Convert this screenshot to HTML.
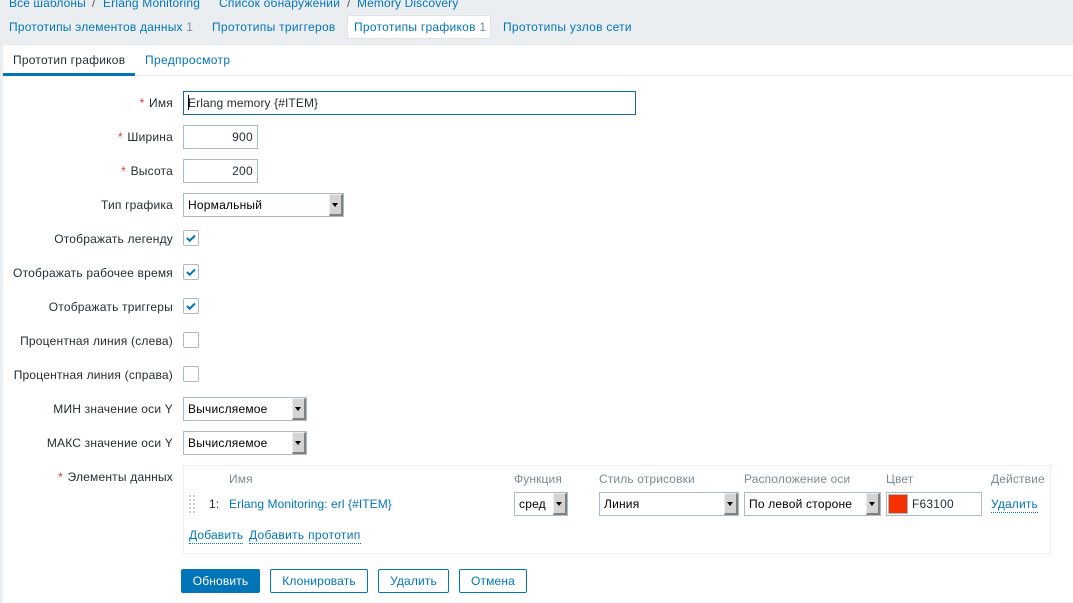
<!DOCTYPE html>
<html lang="ru"><head><meta charset="utf-8"><title>Прототип графиков</title>
<style>
html,body{margin:0;padding:0;width:1073px;height:603px;overflow:hidden;background:#ebeef0}
body{font:12px/14px "Liberation Sans",sans-serif;color:#1f2c33;position:relative;letter-spacing:.2px}
div,span,a,b{position:absolute;white-space:nowrap;box-sizing:border-box}
a{color:#0275b8;text-decoration:none}
i{font-style:normal}
.t{letter-spacing:.27px}
.t i{letter-spacing:0}
.lat{letter-spacing:.1px}
.c{position:absolute;left:3px;top:45px;width:1070px;height:558px;background:#fff}
.l{right:900px;text-align:right}
.l i{color:#e33734;margin-right:1px}
.in{background:#fff;border:1px solid #acbbc2;height:24px;line-height:22px;padding:0 4px}
.s{background:#fff;border:1px solid #acbbc2;height:24px;line-height:22px;padding:0 4px;color:#000}
.s b{right:0;top:0;width:14px;height:22px;background:#d4d4d4;border-top:1px solid #eee;border-left:1px solid #eee;border-right:2px solid #808080;border-bottom:2px solid #808080}
.s b:after{content:"";position:absolute;left:2px;top:8px;border-left:3.5px solid transparent;border-right:3.5px solid transparent;border-top:4px solid #000}
.ch{left:183px;width:16px;height:16px;border:1px solid #acbbc2;border-radius:2px;background:#fff}
.ch svg{position:absolute;left:1px;top:1px}
.h{color:#768d99;top:472px;letter-spacing:.13px}
.d{border-bottom:1px dotted #0275b8;line-height:13px;height:15px}
.b{top:569px;height:24px;line-height:22px;border:1px solid #0275b8;border-radius:2px;text-align:center;color:#0275b8;background:#fff;letter-spacing:.15px}
.n{color:#768d99}
</style></head><body>
<a style="left:9px;top:-4px;letter-spacing:.1px">Все шаблоны</a><span style="left:92px;top:-4px;color:#555">/</span>
<a class="lat" style="left:103px;top:-4px;letter-spacing:.18px">Erlang Monitoring</a>
<a style="left:219px;top:-4px">Список обнаружений</a><span style="left:347px;top:-4px;color:#555">/</span>
<a class="lat" style="left:357px;top:-4px;letter-spacing:.13px">Memory Discovery</a>
<a class="t" style="left:9px;top:20px;letter-spacing:.2px">Прототипы элементов данных <i class="n">1</i></a>
<a class="t" style="left:212px;top:20px;letter-spacing:.3px">Прототипы триггеров</a>
<div style="left:347px;top:15px;width:144px;height:24px;background:#fff;border:1px solid #dfe4e7;border-radius:2px"></div>
<a class="t" style="left:354px;top:20px">Прототипы графиков <i class="n">1</i></a>
<a class="t" style="left:503px;top:20px">Прототипы узлов сети</a>
<div class="c"></div>
<div style="left:3px;top:75px;width:1070px;height:1px;background:#ebeef0"></div>
<span style="left:13px;top:53px;letter-spacing:.24px">Прототип графиков</span>
<div style="left:3px;top:73px;width:132px;height:3px;background:#0275b8"></div>
<a style="left:145px;top:53px;letter-spacing:.33px">Предпросмотр</a>

<span class="l" style="top:96px"><i>*</i> Имя</span>
<div class="in lat" style="left:183px;top:91px;width:453px;border-color:#0f6a9f;color:#1f2c33">Erlang memory {#ITEM}</div>
<div style="left:188px;top:95px;width:1px;height:15px;background:#000"></div>
<span class="l" style="top:130px"><i>*</i> Ширина</span>
<div class="in" style="left:183px;top:125px;width:75px;text-align:right;letter-spacing:.3px">900</div>
<span class="l" style="top:164px"><i>*</i> Высота</span>
<div class="in" style="left:183px;top:159px;width:75px;text-align:right;letter-spacing:.3px">200</div>
<span class="l" style="top:198px">Тип графика</span>
<div class="s" style="left:183px;top:193px;width:161px">Нормальный<b></b></div>

<span class="l" style="top:232px">Отображать легенду</span>
<div class="ch" style="top:230px"><svg width="12" height="12" viewBox="0 0 12 12"><path d="M2 6l2.700 2.700L10 3.500" fill="none" stroke="#0275b8" stroke-width="2"/></svg></div>
<span class="l" style="top:266px">Отображать рабочее время</span>
<div class="ch" style="top:264px"><svg width="12" height="12" viewBox="0 0 12 12"><path d="M2 6l2.700 2.700L10 3.500" fill="none" stroke="#0275b8" stroke-width="2"/></svg></div>
<span class="l" style="top:300px">Отображать триггеры</span>
<div class="ch" style="top:298px"><svg width="12" height="12" viewBox="0 0 12 12"><path d="M2 6l2.700 2.700L10 3.500" fill="none" stroke="#0275b8" stroke-width="2"/></svg></div>
<span class="l" style="top:334px">Процентная линия (слева)</span>
<div class="ch" style="top:332px"></div>
<span class="l" style="top:368px">Процентная линия (справа)</span>
<div class="ch" style="top:366px"></div>

<span class="l" style="top:402px">МИН значение оси Y</span>
<div class="s" style="left:183px;top:397px;width:124px">Вычисляемое<b></b></div>
<span class="l" style="top:436px">МАКС значение оси Y</span>
<div class="s" style="left:183px;top:431px;width:124px">Вычисляемое<b></b></div>
<span class="l" style="top:470px"><i>*</i> Элементы данных</span>

<div style="left:183px;top:465px;width:868px;height:89px;border:1px solid #ebeef0"></div>
<span class="h" style="left:229px">Имя</span>
<span class="h" style="left:514px">Функция</span>
<span class="h" style="left:599px">Стиль отрисовки</span>
<span class="h" style="left:744px">Расположение оси</span>
<span class="h" style="left:886px">Цвет</span>
<span class="h" style="left:991px">Действие</span>
<svg style="position:absolute;left:189px;top:495px" width="7" height="19"><g fill="#c5ced3"><rect x="0" width="2" height="2"/><rect x="4" width="2" height="2"/><rect x="0" y="4" width="2" height="2"/><rect x="4" y="4" width="2" height="2"/><rect x="0" y="8" width="2" height="2"/><rect x="4" y="8" width="2" height="2"/><rect x="0" y="12" width="2" height="2"/><rect x="4" y="12" width="2" height="2"/><rect x="0" y="16" width="2" height="2"/><rect x="4" y="16" width="2" height="2"/></g></svg>
<span style="left:209px;top:497px">1:</span>
<a class="lat" style="left:229px;top:497px;letter-spacing:.07px">Erlang Monitoring: erl {#ITEM}</a>
<div class="s" style="left:514px;top:492px;width:54px">сред<b></b></div>
<div class="s" style="left:599px;top:492px;width:140px">Линия<b></b></div>
<div class="s" style="left:744px;top:492px;width:137px">По левой стороне<b></b></div>
<div class="in lat" style="left:886px;top:492px;width:96px;padding-left:25px;color:#1f2c33;letter-spacing:.2px">F63100</div>
<div style="left:888px;top:494px;width:20px;height:20px;background:#f63100;border:1px solid #acbbc2"></div>
<a class="d" style="left:991px;top:498px;letter-spacing:.15px">Удалить</a>
<a class="d" style="left:189px;top:529px;letter-spacing:.15px">Добавить</a>
<a class="d" style="left:249px;top:529px;letter-spacing:.3px">Добавить прототип</a>

<div class="b" style="left:181px;width:79px;background:#0275b8;color:#fff">Обновить</div>
<div class="b" style="left:270px;width:98px">Клонировать</div>
<div class="b" style="left:378px;width:71px">Удалить</div>
<div class="b" style="left:459px;width:68px">Отмена</div>
<div style="left:1000px;top:602px;width:73px;height:1px;background:#ebeef0"></div>
</body></html>
